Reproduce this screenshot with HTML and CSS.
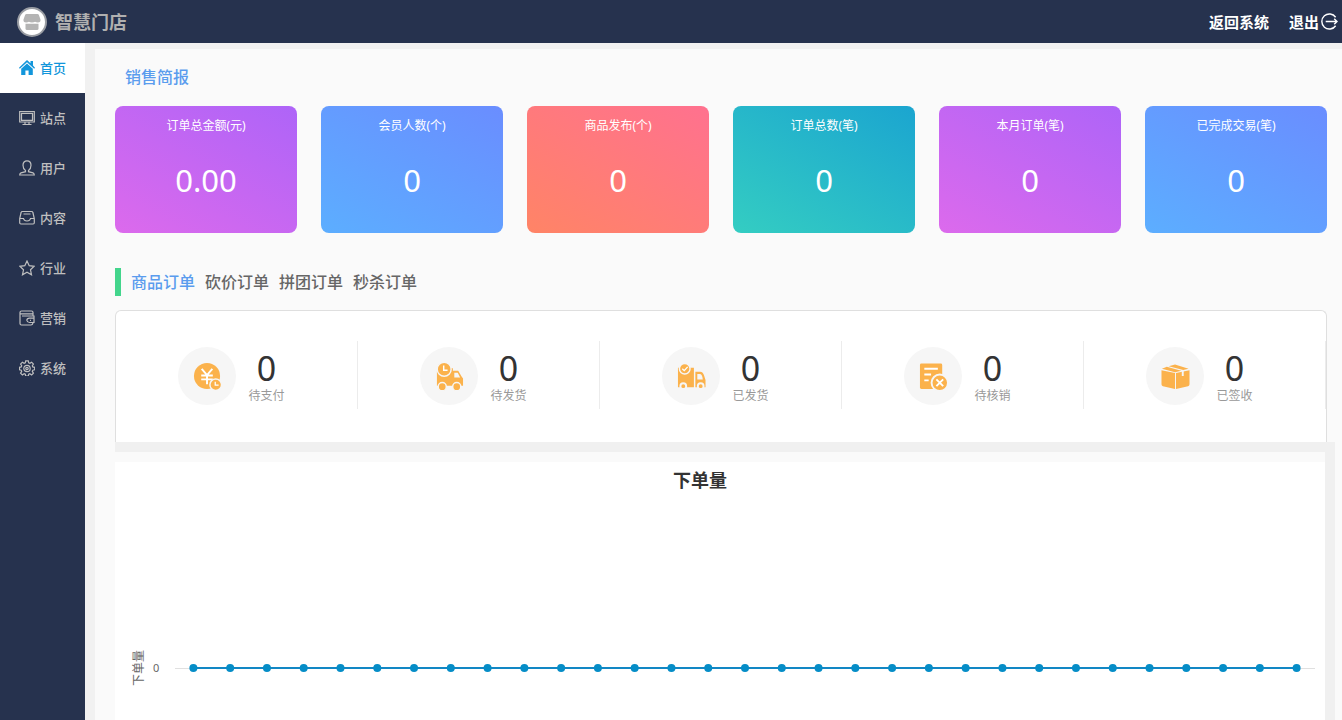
FILE: index.html
```html
<!DOCTYPE html>
<html lang="zh-CN">
<head>
<meta charset="utf-8">
<title>智慧门店</title>
<link rel="stylesheet" href="styles.css">
</head>
<body>
<header class="topbar">
  <a class="brand" href="#">
    <svg class="brand-logo" viewBox="0 0 30 30" aria-hidden="true">
      <circle cx="15" cy="15" r="14" fill="#fff" stroke="#9a9da3" stroke-width="2"/>
      <path d="M9.500 7h11q1 0 1.400 1l1.600 4.500q.4 3-2.600 3-2 0-2.800-.8-1.100.8-3.100.8t-3.100-.8q-.9.8-2.800.8-3 0-2.600-3l1.600-4.500q.4-1 1.400-1z" fill="#b4b4b4"/>
      <path d="M8.500 16.800h13v4.700q0 1.500-1.500 1.500H10q-1.500 0-1.500-1.500z" fill="#b4b4b4"/>
    </svg>
    <span>智慧门店</span>
  </a>
  <nav class="actions">
    <a href="#">返回系统</a>
    <a class="logout" href="#">退出<svg viewBox="0 0 18 18" aria-hidden="true"><path d="M15.500 4.500a8 8 0 1 0 0 9M5 9h12M14 6l3 3-3 3"/></svg></a>
  </nav>
</header>
<div class="layout">
  <nav class="sidebar">
    <a class="active" href="#"><svg viewBox="0 0 16 16" aria-hidden="true"><path class="solid" d="M8 0 11.500 3.200V1H14v4.500l2 2.200-.8 1.100L8 2.200.8 8.800 0 7.700z"/><path class="solid" d="M8 3.600l5.800 5.200V15H9.600v-4.500H6.400V15H2.200V8.800z"/></svg>首页</a>
    <a href="#"><svg viewBox="0 0 16 16" aria-hidden="true"><path d="M.7 1.500h14.600v10.500H.7zM2.500 3.300h11v7h-11zM6 12v2M10 12v2M3.500 14.500h9"/></svg>站点</a>
    <a href="#"><svg viewBox="0 0 16 16" aria-hidden="true"><path d="M6.500 10.500C4.800 9.300 4 7.500 4 5.300 4 2.500 5.600.8 8 .8s4 1.700 4 4.500c0 2.200-.8 4-2.500 5.200v1.200l4.500 1.200q1.200.5 1.300 2.100H.7q.1-1.600 1.300-2.100l4.500-1.200z"/></svg>用户</a>
    <a href="#"><svg viewBox="0 0 16 16" aria-hidden="true"><path d="M3.500 1.500h9q1.200 0 1.400 1l1.400 6v4.300q0 1.200-1.200 1.200H1.900Q.7 14 .7 12.800V8.500l1.400-6q.2-1 1.400-1zM1 8.500h3.500Q5 11 8 11t3.500-2.500H15M4.500 4h7"/></svg>内容</a>
    <a href="#"><svg viewBox="0 0 16 16" aria-hidden="true"><path d="M8 1l2.200 4.700 5 .6-3.700 3.500 1 5L8 12.300l-4.500 2.500 1-5L.8 6.300l5-.6z"/></svg>行业</a>
    <a href="#"><svg viewBox="0 0 16 16" aria-hidden="true"><path d="M14 6V2.500Q14 1 12.500 1h-10Q1 1 1 2.500v11Q1 15 2.500 15h9.500q1.500 0 2-2M1 3.800h13M3 6h12q0 3 0 6.500h-4.500q-2.500-.3-2.700-2.200Q8 8.300 10.500 8.200H15M11 10.300h1"/></svg>营销</a>
    <a href="#"><svg viewBox="0 0 16 16" aria-hidden="true"><path d="M6.700.8h2.600l.4 2 1.200.5 1.700-1.100 1.800 1.800-1.100 1.700.5 1.200 1.900.4v2.500l-1.900.4-.5 1.200 1.100 1.700-1.800 1.800-1.700-1.100-1.200.5-.4 1.900H6.700l-.4-1.900-1.200-.5-1.700 1.100-1.800-1.800 1.100-1.700-.5-1.200L.5 9.800V7.300l1.700-.4.5-1.200L1.600 4l1.800-1.800 1.700 1.100 1.200-.5z"/><circle cx="8" cy="8.500" r="3.200"/><circle cx="8" cy="8.500" r="1.200"/></svg>系统</a>
  </nav>
  <main class="content">
    <div class="page">
      <h2 class="page-title">销售简报</h2>
      <section class="stats">
        <article class="stat purple"><h3>订单总金额(元)</h3><p>0.00</p></article>
        <article class="stat blue"><h3>会员人数(个)</h3><p>0</p></article>
        <article class="stat coral"><h3>商品发布(个)</h3><p>0</p></article>
        <article class="stat teal"><h3>订单总数(笔)</h3><p>0</p></article>
        <article class="stat purple"><h3>本月订单(笔)</h3><p>0</p></article>
        <article class="stat blue"><h3>已完成交易(笔)</h3><p>0</p></article>
      </section>
      <div class="tabs">
        <button type="button" class="selected">商品订单</button>
        <button type="button">砍价订单</button>
        <button type="button">拼团订单</button>
        <button type="button">秒杀订单</button>
      </div>
      <section class="orders">
        <div class="order">
          <span class="disc"><svg viewBox="0 0 30 30" aria-hidden="true"><circle cx="14.500" cy="14.500" r="13.500" fill="#fbb24c"/><path d="M9 7l5.500 6.500L20 7M8.500 14h12M8.500 18h12M14.500 13.500V23" fill="none" stroke="#fff" stroke-width="2"/><circle cx="23.500" cy="23.500" r="6" fill="#fbb24c" stroke="#f6f6f6" stroke-width="1.500"/><path d="M23 20.500v3.500h3.500" fill="none" stroke="#fff" stroke-width="1.300"/></svg></span>
          <div class="figure"><strong>0</strong><span>待支付</span></div>
        </div>
        <div class="order">
          <span class="disc"><svg viewBox="0 0 30 30" aria-hidden="true"><path d="M2 9h14V6.500h2.500V9H24l3.500 6 1.500 2v7.500H2z" fill="#fbb24c"/><path d="M20 11h3.500l2.500 5h-6z" fill="#f6f6f6"/><circle cx="9.500" cy="7.500" r="7.200" fill="#fbb24c" stroke="#f6f6f6" stroke-width="1.500"/><path d="M9 3.500v5h4" fill="none" stroke="#fff" stroke-width="1.500"/><g fill="#fbb24c" stroke="#f6f6f6" stroke-width="1.500"><circle cx="7.500" cy="25.500" r="4.200"/><circle cx="22.500" cy="25.500" r="4.200"/></g></svg></span>
          <div class="figure"><strong>0</strong><span>待发货</span></div>
        </div>
        <div class="order">
          <span class="disc"><svg viewBox="0 0 30 30" aria-hidden="true"><path d="M1 6h16.500v20H1zM19 10h5q3 0 4 4l1.500 4.500V26H19z" fill="#fbb24c"/><path d="M21 12.500h2.500q2.500 0 3.200 5.500H21z" fill="#f6f6f6"/><circle cx="8" cy="7" r="5.500" fill="#fbb24c" stroke="#f6f6f6" stroke-width="1.500"/><path d="M5.500 7l2 2 3.500-4" fill="none" stroke="#fff" stroke-width="1.300"/><g fill="#fbb24c" stroke="#f6f6f6" stroke-width="2"><circle cx="6.500" cy="25" r="3"/><circle cx="24.500" cy="25" r="3"/></g></svg></span>
          <div class="figure"><strong>0</strong><span>已发货</span></div>
        </div>
        <div class="order">
          <span class="disc"><svg viewBox="0 0 30 30" aria-hidden="true"><rect x="1" y="1.500" width="23" height="26.500" rx="1.500" fill="#fbb24c"/><path d="M5.500 7h14M5.500 13h7M5.500 19h4.500" fill="none" stroke="#fff" stroke-width="2"/><circle cx="21.500" cy="21.500" r="8.500" fill="#fbb24c" stroke="#f6f6f6" stroke-width="2"/><path d="M18 18l7 7M25 18l-7 7" stroke="#fff" stroke-width="2"/></svg></span>
          <div class="figure"><strong>0</strong><span>待核销</span></div>
        </div>
        <div class="order">
          <span class="disc"><svg viewBox="0 0 30 30" aria-hidden="true"><path d="M.5 8.500 14.500 11.500V28L2 25q-1.500-.4-1.500-2zM15.500 11.500 29.500 8.500V23q0 1.600-1.500 2l-12.500 3zM1 7l5-2 15 4-6.500 1.500zM8 4.300l6.500-1.800L28.500 7 23 8.300z" fill="#fbb24c"/><path d="M22.500 9v5.500" stroke="#f6f6f6" stroke-width="2"/></svg></span>
          <div class="figure"><strong>0</strong><span>已签收</span></div>
        </div>
      </section>
      <section class="chart-frame">
        <div class="chart">
          <h2 class="chart-title">下单量</h2>
          <div class="chart-body">
            <span class="axis-name">下单量</span>
            <span class="axis-value">0</span>
            <svg class="plot" id="plot" role="img" aria-label="下单量"><line class="grid" x1="0" x2="100%" y1="10.500" y2="10.500"/></svg>
          </div>
        </div>
      </section>
    </div>
  </main>
</div>
<script src="chart.js"></script>
</body>
</html>
```
FILE: styles.css
```css
* { box-sizing: border-box; }
body {
  margin: 0;
  height: 100vh;
  display: flex;
  flex-direction: column;
  overflow: hidden;
  background: #f1f1f1;
  color: #333;
  font: 13px/20px "Noto Sans", "Noto Sans CJK SC", sans-serif;
}
a { color: inherit; text-decoration: none; }
h2, h3, p { margin: 0; font-weight: 400; }
svg { flex: none; display: block; }

.topbar {
  flex: none;
  height: 43px;
  padding: 0 4px 0 17px;
  display: flex;
  align-items: center;
  justify-content: space-between;
  background: #26324e;
}
.brand {
  display: flex;
  align-items: center;
  gap: 8px;
  color: #b0b0b0;
  font-size: 18px;
  font-weight: 700;
}
.brand-logo { width: 30px; height: 30px; }
.actions { display: flex; gap: 20px; color: #fff; font-size: 15px; font-weight: 700; }
.logout { display: flex; align-items: center; gap: 2px; }
.logout svg { width: 17px; height: 17px; fill: none; stroke: #fff; stroke-width: 1.5; }

.layout { flex: 1; min-height: 0; display: flex; }
.sidebar { flex: none; width: 85px; background: #26324e; color: #bfbfbf; font-weight: 500; }
.sidebar a { height: 50px; padding-left: 19px; display: flex; align-items: center; gap: 5px; }
.sidebar svg { width: 16px; height: 16px; fill: none; stroke: currentColor; stroke-width: 1.2; }
.sidebar .solid { fill: currentColor; stroke: none; }
.sidebar .active { background: #fff; color: #1296db; }

.content { flex: 1; min-width: 0; padding: 6px 0 0 10px; overflow-y: auto; scrollbar-width: none; }
.page { padding: 18px 15px 20px 20px; background: #fafafa; }
.page-title { padding-left: 10px; color: #5a9cee; font-size: 16px; font-weight: 500; }

.stats { margin-top: 19px; display: grid; grid-template-columns: repeat(6, 1fr); gap: 24px; }
.stat { height: 127px; padding-top: 10px; border-radius: 8px; color: #fff; text-align: center; }
.stat h3 { font-size: 12px; }
.stat p { margin-top: 24px; font-size: 31px; line-height: 40px; }
.purple { background: linear-gradient(30deg, #dc6aec, #ae64f8); }
.blue { background: linear-gradient(30deg, #5caeff, #6a8dff); }
.coral { background: linear-gradient(30deg, #ff8466, #ff718f); }
.teal { background: linear-gradient(30deg, #34cdc2, #1ba5d0); }

.tabs {
  margin-top: 35px;
  height: 28px;
  padding-left: 10px;
  display: flex;
  align-items: center;
  gap: 10px;
  border-left: 6px solid #43d58c;
}
.tabs button { padding: 0; border: 0; background: none; color: #666; font: inherit; font-size: 16px; font-weight: 500; cursor: pointer; }
.tabs .selected { color: #5a9cee; }

.orders {
  margin-top: 14px;
  height: 132px;
  padding-top: 30px;
  display: grid;
  grid-template-columns: repeat(5, 1fr);
  align-items: start;
  background: #fff;
  border: 1px solid #dfdfdf;
  border-bottom: 0;
  border-radius: 6px 6px 0 0;
}
.order {
  height: 68px;
  padding: 6px 10px 0 0;
  display: flex;
  justify-content: center;
  gap: 12px;
  border-right: 1px solid #ececec;
}
.disc { width: 58px; height: 58px; border-radius: 50%; background: #f6f6f6; display: grid; place-items: center; }
.disc svg { width: 29px; height: 29px; }
.figure { display: flex; flex-direction: column; text-align: center; }
.figure strong { font-size: 34px; line-height: 42px; font-weight: 400; }
.figure span { color: #999; font-size: 12px; line-height: 14px; }

.chart-frame { margin-right: -8px; padding-top: 10px; border: solid #f0f0f0; border-width: 10px 10px 0 0; }
.chart { background: #fff; padding: 8px 10px 60px 14px; }
.chart-title { font-size: 18px; font-weight: 700; text-align: center; padding-right: 44px; }
.chart-body { margin-top: 160px; display: flex; align-items: center; color: #666; font-size: 12px; }
.axis-name {
  width: 20px;
  writing-mode: vertical-rl;
  text-orientation: sideways;
  transform: rotate(180deg);
  line-height: 20px;
}
.axis-value { width: 26px; padding-left: 4px; font-size: 11px; }
.plot { flex: 1; min-width: 0; height: 20px; }
.grid { stroke: #e0e0e0; }
.series { stroke: #1287c4; stroke-width: 2; }
.point { fill: #058dc7; }
```
FILE: chart.js
```js
const orders = new Array(31).fill(0);
const plot = document.getElementById("plot");

function draw(name, attributes) {
  const node = document.createElementNS("http://www.w3.org/2000/svg", name);
  Object.entries(attributes).forEach(([key, value]) => node.setAttribute(key, value));
  plot.appendChild(node);
}

const position = (index) => ((index + 0.5) * 100) / orders.length + "%";

draw("line", { class: "series", x1: position(0), x2: position(orders.length - 1), y1: 10, y2: 10 });
orders.forEach((value, index) => draw("circle", { class: "point", cx: position(index), cy: 10, r: 4 }));
```
